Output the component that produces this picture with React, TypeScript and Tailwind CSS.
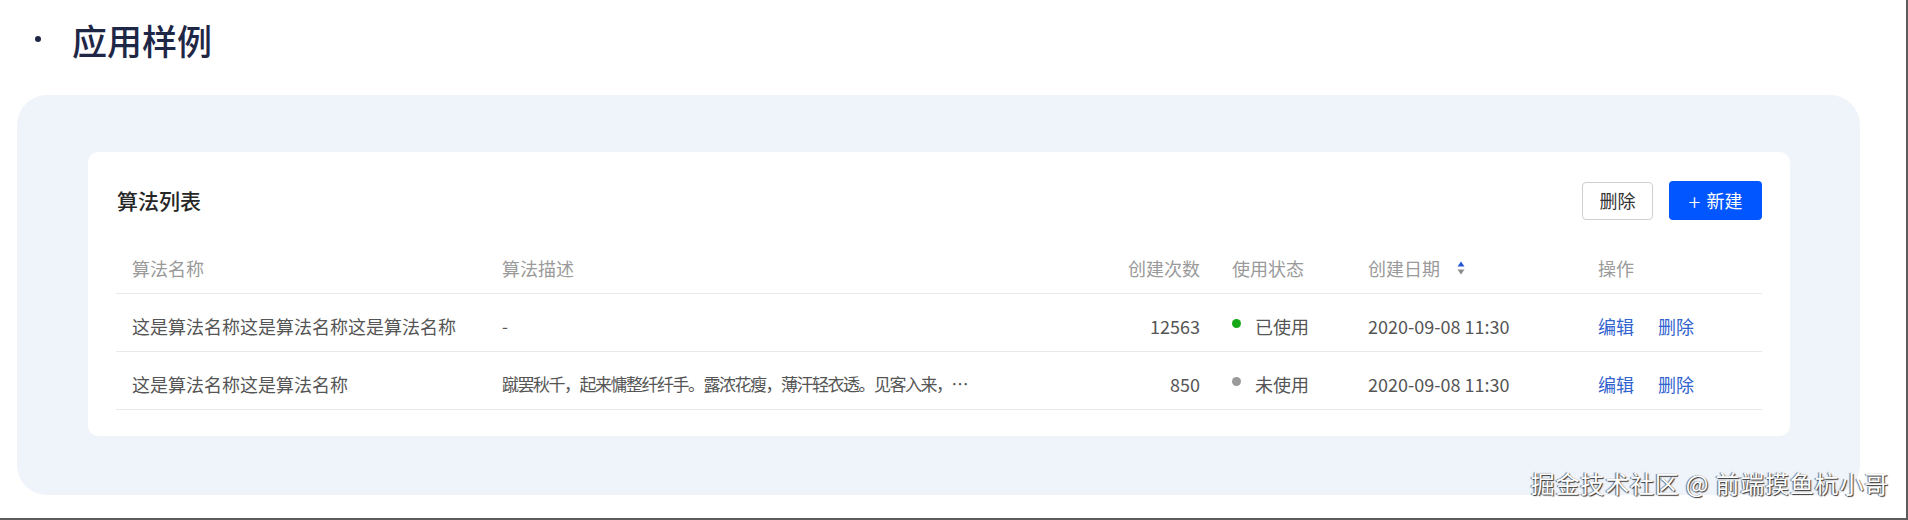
import React from 'react';

interface Algo {
  name: string;
  desc: string;
  count: number;
  used: boolean;
  date: string;
}

const rows: Algo[] = [
  {
    name: '这是算法名称这是算法名称这是算法名称',
    desc: '-',
    count: 12563,
    used: true,
    date: '2020-09-08 11:30',
  },
  {
    name: '这是算法名称这是算法名称',
    desc: '蹴罢秋千，起来慵整纤纤手。露浓花瘦，薄汗轻衣透。见客入来，袜刬金钗溜。和羞走，倚门回首，却把青梅嗅。',
    count: 850,
    used: false,
    date: '2020-09-08 11:30',
  },
];

const cols = 'grid grid-cols-[370px_614px_116px_136px_230px_180px]';

const SortIcon = () => (
  <svg width="8" height="14" viewBox="0 0 8 14" className="ml-[17px]">
    <path d="M4 0.5 L7.5 5.5 L0.5 5.5 Z" fill="#2457d6" />
    <path d="M4 13.5 L7.5 8.5 L0.5 8.5 Z" fill="#8c8c8c" />
  </svg>
);

const App: React.FC = () => {
  return (
    <div className="relative w-[1908px] h-[520px] overflow-hidden bg-white border-r-2 border-b-2 border-[#5c5c5c] font-['Noto_Sans_CJK_SC','Noto_Sans',sans-serif]">
      {/* Section title */}
      <div className="flex items-center h-[78px] pl-[35px]">
        <span className="w-[6px] h-[6px] rounded-full bg-[#1f2747]" />
        <h2 className="ml-[31px] text-[35px] font-medium text-[#1f2747] leading-none">应用样例</h2>
      </div>

      {/* Demo panel */}
      <div className="mt-[17px] ml-[17px] w-[1843px] h-[400px] rounded-[30px] bg-[#eff3fa] pt-[57px] pl-[71px]">
        <div className="w-[1702px] h-[284px] rounded-[10px] bg-white px-[28px] pt-[29px]">
          {/* Card header */}
          <div className="flex items-center justify-between h-[39px]">
            <h3 className="pl-px text-[21px] font-medium text-[#262626]">算法列表</h3>
            <div className="flex items-center gap-[16px]">
              <button className="w-[71px] h-[38px] rounded-[4px] border border-[#cfcfcf] bg-white text-[18px] text-[#333]">
                删除
              </button>
              <button className="flex items-center justify-center w-[93px] h-[39px] rounded-[4px] bg-[#0256ff] text-[18px] text-white">
                <span className="mr-[6px] text-[22px] leading-none font-light">+</span>新建
              </button>
            </div>
          </div>

          {/* Table */}
          <div className="mt-[16px] text-[18px]">
            <div className={`${cols} h-[58px] items-center pt-[7px] border-b border-[#e9e9e9] text-[#9a9a9a]`}>
              <div className="px-[16px]">算法名称</div>
              <div className="px-[16px]">算法描述</div>
              <div className="px-[16px] text-right">创建次数</div>
              <div className="px-[16px]">使用状态</div>
              <div className="px-[16px] flex items-center">
                创建日期
                <SortIcon />
              </div>
              <div className="px-[16px]">操作</div>
            </div>
            {rows.map((r, i) => (
              <div
                key={i}
                className={`${cols} h-[58px] items-center pt-[7px] border-b border-[#e9e9e9] text-[#555]`}
              >
                <div className="px-[16px] truncate">{r.name}</div>
                <div className="px-[16px] min-w-0">
                  <div className="w-[472px] truncate text-[17px] tracking-[-1.5px]">{r.desc}</div>
                </div>
                <div className="px-[16px] text-right">{r.count}</div>
                <div className="px-[16px] flex items-center">
                  <span
                    className={`w-[9px] h-[9px] rounded-full mb-[5px] ${r.used ? 'bg-[#16a816]' : 'bg-[#9a9a9a]'}`}
                  />
                  <span className="ml-[14px]">{r.used ? '已使用' : '未使用'}</span>
                </div>
                <div className="px-[16px]">{r.date}</div>
                <div className="px-[16px] flex gap-[24px] text-[#3163cf]">
                  <span>编辑</span>
                  <span>删除</span>
                </div>
              </div>
            ))}
          </div>
        </div>
      </div>

      {/* Watermark */}
      <div className="absolute right-[17px] top-[471px] text-[24px] leading-none tracking-[0.8px] text-white [text-shadow:1px_1px_1px_#333,-1px_0_1px_#666]">
        掘金技术社区 @ 前端摸鱼杭小哥
      </div>
    </div>
  );
};

export default App;
